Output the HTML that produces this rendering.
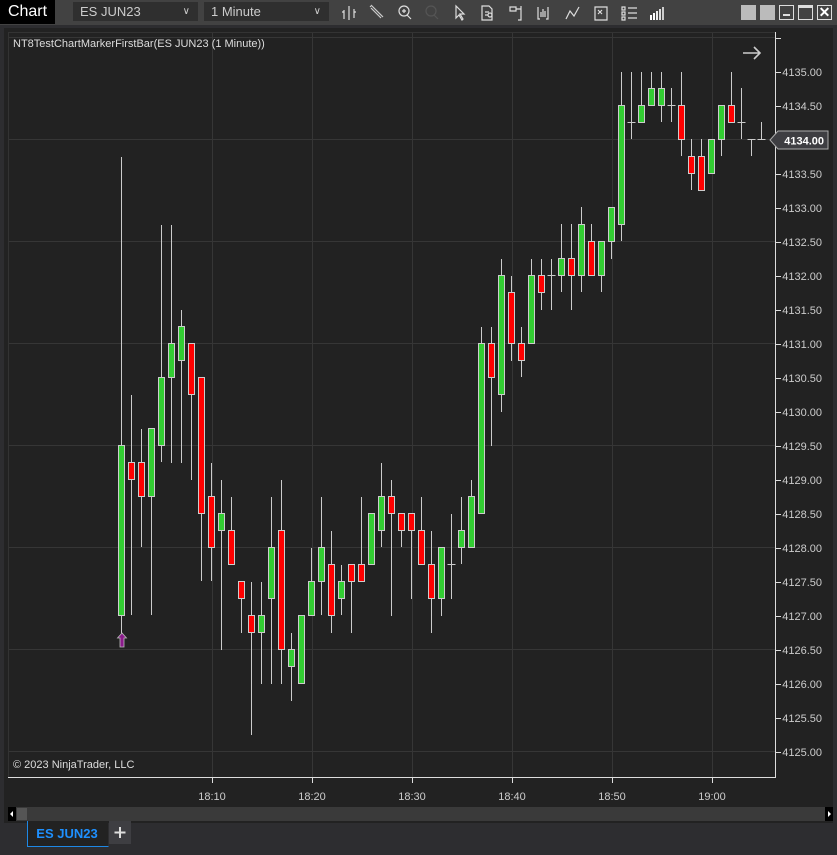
<!DOCTYPE html>
<html><head><meta charset="utf-8"><style>
body{margin:0;width:837px;height:855px;background:#2d2d30;overflow:hidden;font-family:"Liberation Sans",sans-serif;position:relative}
.tb{position:absolute;left:0;top:0;width:837px;height:25px;background:#424242}
.title{position:absolute;left:0;top:0;width:55px;height:24px;background:#000;color:#fff;font-size:16px;line-height:24px;text-align:center}
.dd{position:absolute;top:2px;height:19px;background:#2f2f2f;color:#ccc;font-size:13px;line-height:19px;padding-left:7px;box-sizing:border-box}
.dd span{position:absolute;right:8px;top:0;font-size:10px}
.wb{position:absolute;top:5px;width:15px;height:15px;box-sizing:border-box}
</style></head><body>
<div class="tb"></div>
<div class="title">Chart</div>
<div class="dd" style="left:73px;width:125px">ES JUN23<span>&#8744;</span></div>
<div class="dd" style="left:204px;width:125px">1 Minute<span>&#8744;</span></div>
<svg style="position:absolute;left:0;top:0" width="837" height="25" fill="none" stroke="#ddd" stroke-width="1.2">
<path d="M344 10v9M349 6v14M354 9v9M344 12h-2M354 12h2"/>
<path d="M371 8l10 10M372 6l11 11M370 7l2-2" stroke="#ccc"/>
<circle cx="404" cy="11" r="5"/><path d="M407 15l4 4M402 11h4M404 9v4"/>
<circle cx="431" cy="11" r="5" stroke="#555"/><path d="M434 15l4 4" stroke="#555"/>
<path d="M456 6l0 12l3-3l3 5l1-1l-3-5l4 0z"/>
<path d="M482 6h7l3 3v11h-10z M485 12h4M485 15h3"/><circle cx="490" cy="15" r="2"/>
<path d="M510 7h6v4h-6zM516 9h5M521 6v14h-3"/>
<path d="M538 7v12h2M548 7v12h-2M541 17v-5M543 17v-8M545 17v-6"/>
<path d="M566 19l4-8l4 5l5-9"/>
<path d="M595 7h12v13h-12zM598 10l4 4M602 10l-4 4"/>
<path d="M622 7h3v3h-3zM622 12h3v3h-3zM622 17h3v3h-3zM628 8h9M628 13h9M628 18h9"/>
</svg>
<svg style="position:absolute;left:649px;top:6px" width="16" height="14"><rect x="1" y="9" width="2" height="5" fill="#fff"/><rect x="4" y="7" width="2" height="7" fill="#fff"/><rect x="7" y="5" width="2" height="9" fill="#eee"/><rect x="10" y="3" width="2" height="11" fill="#ddd"/><rect x="13" y="1" width="2" height="13" fill="#ccc"/></svg>
<div class="wb" style="left:741px;background:#bbb"></div>
<div class="wb" style="left:760px;background:#bbb"></div>
<div class="wb" style="left:779px;border:1px solid #ddd"><div style="position:absolute;left:3px;right:3px;bottom:3px;height:2px;background:#ddd"></div></div>
<div class="wb" style="left:798px;border:1px solid #ddd;border-top:3px solid #ddd"></div>
<div class="wb" style="left:817px;border:1px solid #ddd;color:#fff;font-size:14px;line-height:12px;text-align:center;font-weight:bold">✕</div>

<svg id="ch" style="position:absolute;left:0;top:25px" width="837" height="830" viewBox="0 25 837 830">
<rect x="4" y="28" width="829" height="795" fill="#222"/>
<rect x="8.5" y="32.5" width="767" height="745" fill="#222" stroke="#333"/>
<g id="grid" stroke="#363636" stroke-width="1"></g>
<g id="candles"></g>
<line x1="775.5" y1="32" x2="775.5" y2="778" stroke="#ddd"/>
<line x1="8" y1="777.5" x2="776" y2="777.5" stroke="#ddd"/>
<g id="axis" font-size="11" fill="#ccc"></g>
<path d="M770 140l8-9h50v18h-50z" fill="#3e3e42" stroke="#aaa"/>
<text x="824" y="144.5" font-size="11" fill="#fff" font-weight="bold" text-anchor="end">4134.00</text>
<text x="13" y="47" font-size="11" fill="#ddd">NT8TestChartMarkerFirstBar(ES JUN23 (1 Minute))</text>
<text x="13" y="768" font-size="11" fill="#ddd">© 2023 NinjaTrader, LLC</text>
<path d="M743 53h17M754 47l6 6l-6 6" stroke="#ccc" stroke-width="1.6" fill="none"/>
<path d="M122 633l-4.5 5h2.5v9h4v-9h2.5z" fill="#8b1a8b" stroke="#bbb" stroke-width="0.8"/>
<rect x="8" y="807" width="825" height="14" fill="#3a3a3a"/>
<rect x="8" y="807" width="8" height="14" fill="#000"/><path d="M13 811v6l-3-3z" fill="#fff"/>
<rect x="825" y="807" width="8" height="14" fill="#000"/><path d="M828 811v6l3-3z" fill="#fff"/>
<rect x="17" y="808" width="10" height="12" fill="#555"/>
<rect x="27" y="821" width="81" height="26" fill="#222"/>
<path d="M27.5 821v25.5h81" stroke="#1e88e5" fill="none"/>
<text x="67" y="838" font-size="13" font-weight="bold" fill="#1e90ff" text-anchor="middle">ES JUN23</text>
<rect x="109" y="821" width="22" height="23" fill="#3e3e42"/>
<path d="M120 827v11M114.5 832.5h11" stroke="#ddd" stroke-width="2"/>
</svg>
<script>
var NS="http://www.w3.org/2000/svg";
function el(p,t,a,txt){var e=document.createElementNS(NS,t);for(var k in a)e.setAttribute(k,a[k]);if(txt)e.textContent=txt;p.appendChild(e);return e;}
var g=document.getElementById('grid');
[212,312,412,512,612,712].forEach(function(x){el(g,'line',{x1:x+.5,y1:33,x2:x+.5,y2:777});});
[37,139,241,343,445,547,649,751].forEach(function(y){el(g,'line',{x1:9,y1:y+.5,x2:775,y2:y+.5});});
var ax=document.getElementById('axis');
for(var i=0;i<=20;i++){var y=72+34*i;var p=(4135-i*0.5).toFixed(2);
 el(ax,'line',{x1:775,y1:y+.5,x2:781,y2:y+.5,stroke:'#ddd'});
 if(i!=2)el(ax,'text',{x:822,y:y+4,'text-anchor':'end'},p);}
el(ax,'line',{x1:775,y1:38.5,x2:781,y2:38.5,stroke:'#ddd'});
var ts=['18:10','18:20','18:30','18:40','18:50','19:00'];
ts.forEach(function(t,i){var x=212+100*i;el(ax,'line',{x1:x+.5,y1:777,x2:x+.5,y2:783,stroke:'#ddd'});el(ax,'text',{x:x,y:800,'text-anchor':'middle'},t);});
// [x, high, low, bodyTop, bodyBot, type]
var D=[
[121,157,633,445,615,'g'],[131,395,615,462,479,'r'],[141,429,547,462,496,'r'],[151,428,615,428,496,'g'],
[161,225,462,377,445,'g'],[171,225,463,343,377,'g'],[181,310,463,326,360,'g'],[191,343,480,343,394,'r'],
[201,377,581,377,513,'r'],[211,463,581,496,547,'r'],[221,480,650,513,530,'g'],[231,497,564,530,564,'r'],
[241,581,633,581,598,'r'],[251,582,735,615,632,'r'],[261,582,684,615,632,'g'],[271,497,684,547,598,'g'],
[281,480,684,530,649,'r'],[291,633,701,649,666,'g'],[301,615,684,615,683,'g'],[311,548,615,581,615,'g'],
[321,497,615,547,581,'g'],[331,531,633,564,615,'r'],[341,565,615,581,598,'g'],[351,564,633,564,581,'r'],
[361,497,581,564,581,'r'],[371,513,564,513,564,'g'],[381,463,547,496,530,'g'],[391,480,616,496,513,'r'],
[401,513,547,513,530,'r'],[411,513,599,513,530,'r'],[421,497,564,530,564,'r'],[431,531,633,564,598,'r'],
[441,547,616,547,598,'g'],[451,514,599,564,564,'d'],[461,497,564,530,547,'g'],[471,480,547,496,547,'g'],
[481,327,513,343,513,'g'],[491,327,446,343,377,'r'],[501,259,412,275,394,'g'],[511,276,361,292,343,'r'],
[521,327,377,343,360,'r'],[531,259,343,275,343,'g'],[541,259,310,275,292,'r'],[551,259,310,275,275,'d'],
[561,224,292,258,275,'g'],[571,224,310,258,275,'r'],[581,207,292,224,275,'g'],[591,224,275,241,275,'r'],
[601,241,292,241,275,'g'],[611,207,259,207,241,'g'],[621,72,241,105,224,'g'],[631,72,139,122,122,'d'],
[641,72,122,105,122,'g'],[651,72,105,88,105,'g'],[661,72,122,88,105,'g'],[671,88,122,105,105,'d'],
[681,72,156,105,139,'r'],[691,139,190,156,173,'r'],[701,139,190,156,190,'r'],[711,139,173,139,173,'g'],
[721,105,156,105,139,'g'],[731,72,122,105,122,'r'],[741,88,139,122,122,'d'],[751,139,156,139,139,'d'],[761,122,139,139,139,'d']];
var c=document.getElementById('candles');
D.forEach(function(d){var x=d[0]+.5;
 el(c,'line',{x1:x,y1:d[1],x2:x,y2:d[2],stroke:'#ccc'});
 if(d[5]=='d'){el(c,'line',{x1:x-4,y1:d[3]+.5,x2:x+4,y2:d[3]+.5,stroke:'#ccc'});}
 else el(c,'rect',{x:x-3,y:d[3]+.5,width:6,height:d[4]-d[3],fill:d[5]=='g'?'#32cd32':'#ff0000',stroke:'#ccc'});
});
</script>
</body></html>
